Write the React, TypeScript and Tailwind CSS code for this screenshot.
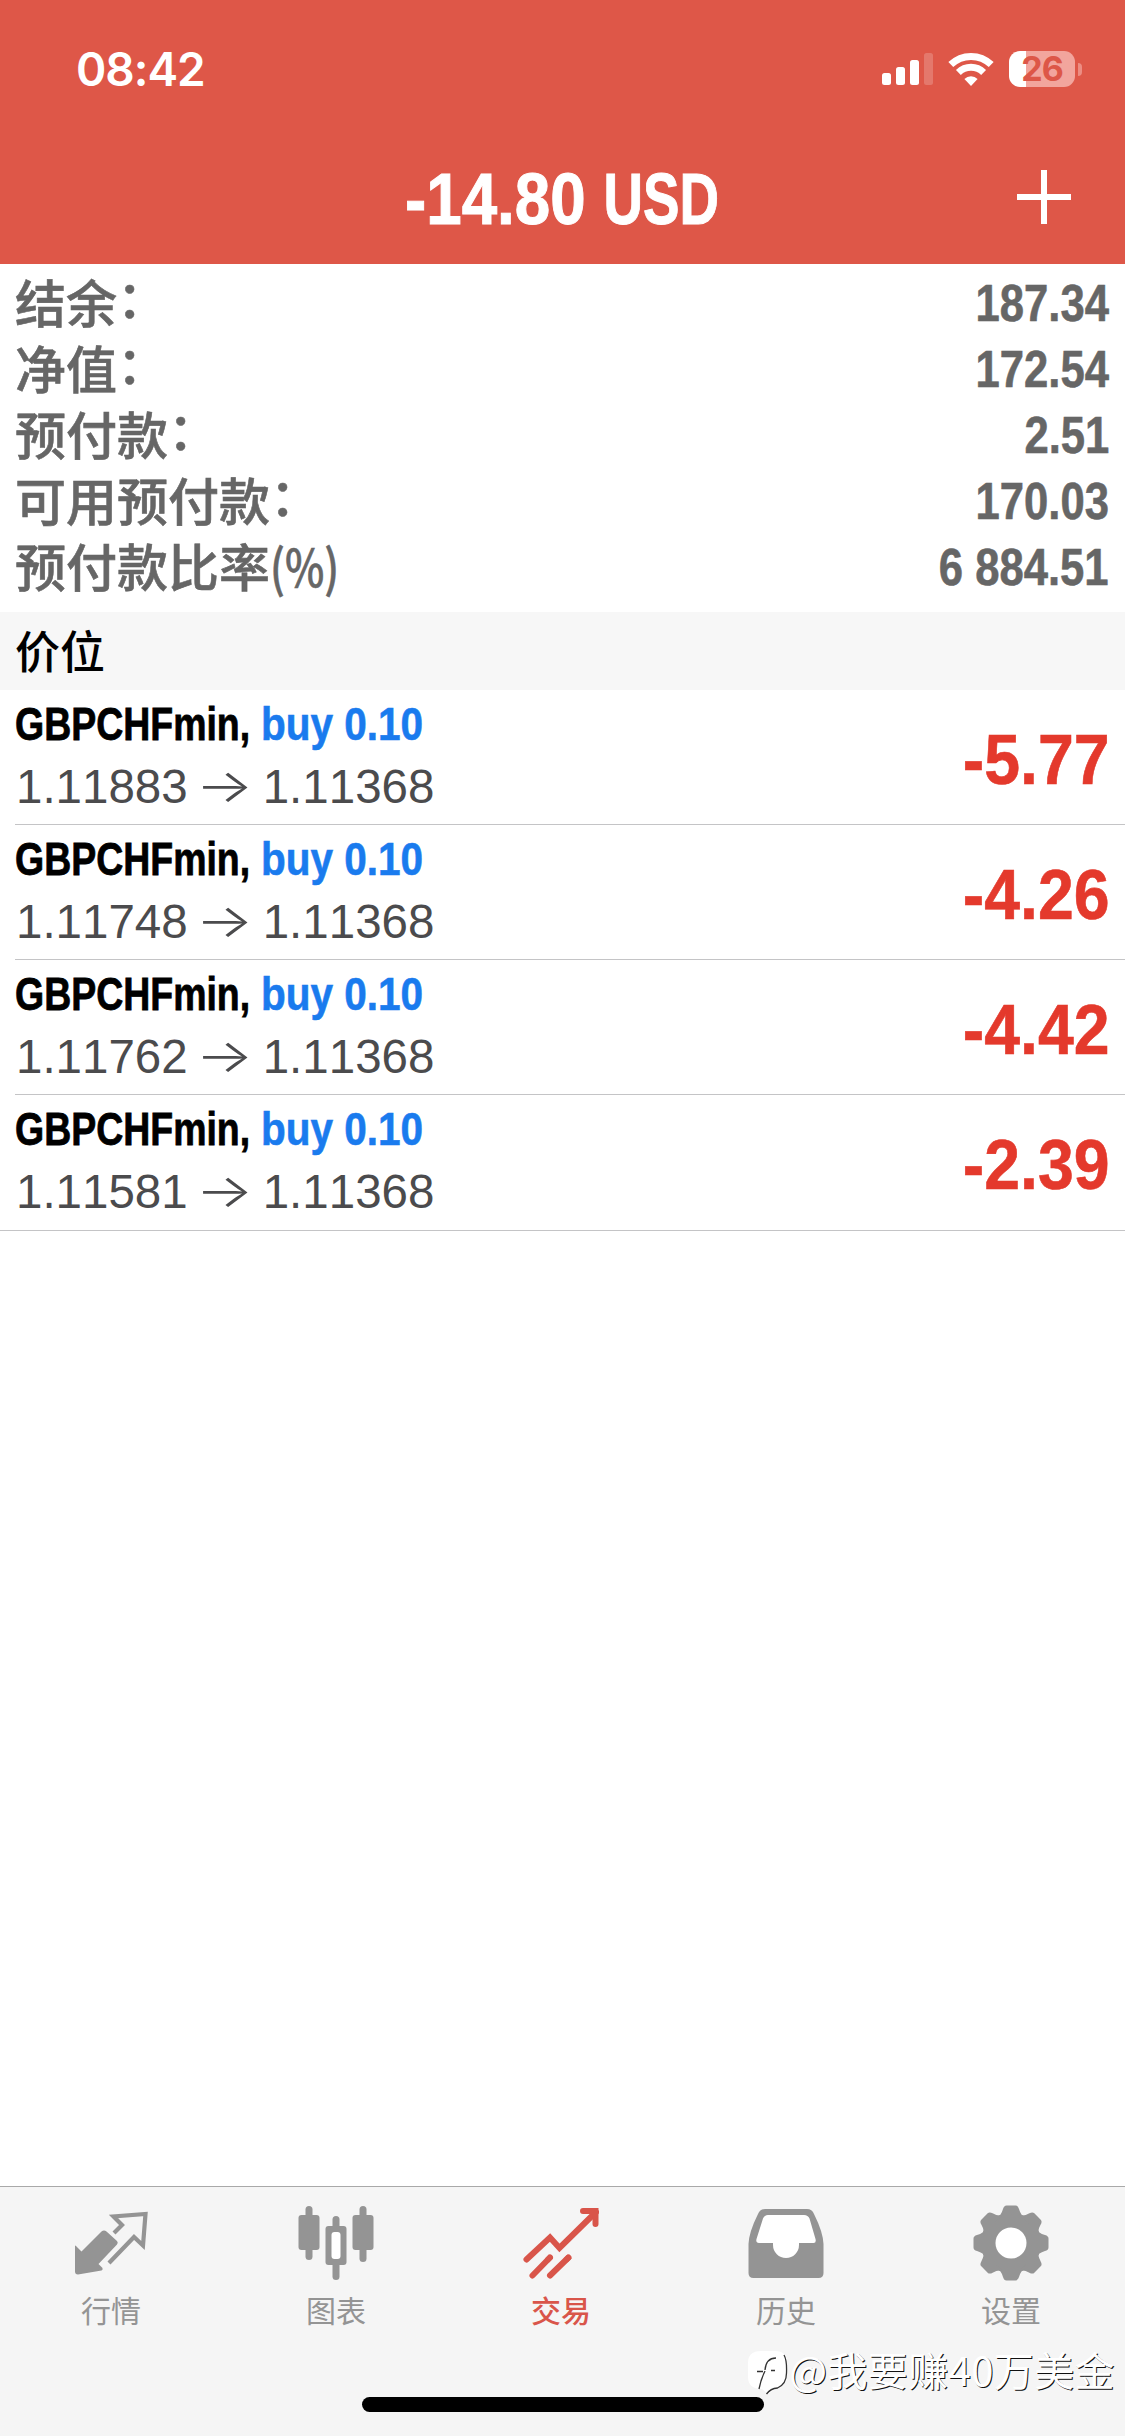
import type { ReactNode } from "react";

const summary = [
  { label: "结余", suffix: "：", value: "187.34" },
  { label: "净值", suffix: "：", value: "172.54" },
  { label: "预付款", suffix: "：", value: "2.51" },
  { label: "可用预付款", suffix: "：", value: "170.03" },
  { label: "预付款比率", suffix: "(%)", value: "6 884.51" },
];

const positions = [
  { symbol: "GBPCHFmin", side: "buy 0.10", open: "1.11883", current: "1.11368", profit: "-5.77" },
  { symbol: "GBPCHFmin", side: "buy 0.10", open: "1.11748", current: "1.11368", profit: "-4.26" },
  { symbol: "GBPCHFmin", side: "buy 0.10", open: "1.11762", current: "1.11368", profit: "-4.42" },
  { symbol: "GBPCHFmin", side: "buy 0.10", open: "1.11581", current: "1.11368", profit: "-2.39" },
];

function StatusBar() {
  return (
    <div className="flex h-[138px] items-center justify-between pr-[43px] pl-[76px]">
      <span className="font-['Inter',sans-serif] text-[46px] leading-none font-semibold tracking-[-1px]">08:42</span>
      <div className="flex items-center">
        <svg width="51" height="34" viewBox="0 0 51 34" fill="currentColor">
          <rect x="0" y="21" width="9" height="12" rx="2.5" />
          <rect x="14" y="15" width="9" height="18" rx="2.5" />
          <rect x="28" y="8" width="9" height="25" rx="2.5" />
          <rect x="42" y="1" width="9" height="32" rx="2.5" opacity="0.2" />
        </svg>
        <svg className="ml-[15px]" width="46" height="34" viewBox="0 0 46 34" fill="none" stroke="currentColor" strokeWidth="7">
          <path d="M2.8 12.6a29 29 0 0 1 40.4 0" />
          <path d="M10.4 20.4a18 18 0 0 1 25.2 0" />
          <path d="M23 34l-6.6-7a9.5 9.5 0 0 1 13.2 0z" fill="currentColor" stroke="none" />
        </svg>
        <div className="ml-[15px] flex h-9 w-[66px] items-center justify-center rounded-[11px] bg-[linear-gradient(90deg,#fff_0_17px,#f2a59d_17px)]">
          <span className="font-['Inter',sans-serif] text-[34px] leading-9 font-bold tracking-[-1px] text-[#dd5748]">26</span>
        </div>
        <div className="ml-[3px] h-[13px] w-1 rounded-r-full bg-[#ec8d83]" />
      </div>
    </div>
  );
}

function Header() {
  return (
    <header className="h-[264px] bg-[#de5748] text-white">
      <StatusBar />
      <div className="grid h-[126px] grid-cols-[1fr_316px_1fr] items-start">
        <span />
        <h1 className="mt-[25px] flex text-[72px] leading-[72px] font-bold [-webkit-text-stroke:1px_white] [font-kerning:none]">
          <span className="w-[200px] shrink-0">
            <span className="inline-block origin-left scale-x-[0.885]">-14.80</span>
          </span>
          <span className="flex w-[115px] justify-end">
            <span className="origin-right scale-x-[0.76]">USD</span>
          </span>
        </h1>
        <button className="mt-[32px] mr-[54px] justify-self-end">
          <svg width="54" height="54" viewBox="0 0 54 54" stroke="currentColor" strokeWidth="6">
            <path d="M27 0v54M0 27h54" />
          </svg>
        </button>
      </div>
    </header>
  );
}

function Summary() {
  return (
    <dl className="h-[348px] pt-1 text-[#666]">
      {summary.map((item) => (
        <div key={item.label} className="flex h-[66px] items-center justify-between pr-4 pl-[15px]">
          <dt className="flex font-['Noto_Sans_CJK_SC',sans-serif] text-[51px] leading-[66px] font-medium [-webkit-text-stroke:0.6px_#666]">
            {item.label}
            {item.suffix === "：" ? (
              <span className="-translate-y-[5px]">{item.suffix}</span>
            ) : (
              <span className="origin-left scale-x-[0.82]">{item.suffix}</span>
            )}
          </dt>
          <dd className="mt-[6px] origin-right scale-x-[0.855] text-[51px] leading-[60px] font-bold [-webkit-text-stroke:0.6px_#666] [font-kerning:none]">
            {item.value}
          </dd>
        </div>
      ))}
    </dl>
  );
}

function PositionRow({ item }: { item: (typeof positions)[number] }) {
  return (
    <li className="group flex h-[135px] pl-[15px] last:h-[136px] last:pl-0">
      <div className="flex flex-1 items-start justify-between border-b border-[#c4c4c6] pr-[15px] group-last:pl-[15px]">
        <div>
          <div className="mt-[6px] flex h-[56px] items-center text-[47px] leading-[56px] font-bold [font-kerning:none]">
            <span className="w-[246px]">
              <span className="inline-block origin-left scale-x-[0.797] text-black [-webkit-text-stroke:0.8px_black]">
                {item.symbol},
              </span>
            </span>
            <span className="inline-block origin-left scale-x-[0.862] text-[#1a7bee] [-webkit-text-stroke:0.6px_#1a7bee]">
              {item.side}
            </span>
          </div>
          <div className="mt-[3px] flex h-[64px] items-center pl-px text-[47.5px] leading-[64px] text-[#4b4b4d] [font-kerning:none]">
            <span>{item.open}</span>
            <span className="flex w-[75px] -translate-x-px -translate-y-[2px] scale-x-[1.32] justify-center font-['Inter',sans-serif] text-[46px] font-light">
              →
            </span>
            <span>{item.current}</span>
          </div>
        </div>
        <span className="mt-[34px] origin-right scale-x-[0.92] text-[70px] leading-[72px] font-bold text-[#e4392c] [-webkit-text-stroke:0.6px_#e4392c] [font-kerning:none]">
          {item.profit}
        </span>
      </div>
    </li>
  );
}

function QuotesIcon() {
  return (
    <svg width="76" height="76" viewBox="0 0 76 76" fill="currentColor">
      <path d="M2 41.500q0-1.500 1-.5l5.500 5.500L28.500 26.500q2.500-2 5 0L44 36q1.500 1.500 0 3.500L25.500 59l4 4q.5 2-1 2.500L5 69.500q-3 0-3-3z" />
      <path d="M41 28l8-8-8.500-8.500L72.500 9 70 40.500l-9-8.500L36 58" fill="none" stroke="currentColor" strokeWidth="4.200" />
    </svg>
  );
}

function ChartIcon() {
  return (
    <svg width="76" height="76" viewBox="0 0 76 76" fill="currentColor">
      <rect x="7.500" y="1" width="7" height="54" rx="3.500" />
      <rect x="0.500" y="10" width="21" height="35" rx="3" />
      <rect x="34.500" y="11" width="7" height="64" rx="3.500" />
      <rect x="27.500" y="21" width="21" height="39" rx="3" />
      <rect x="33.500" y="27" width="9" height="27" rx="3" fill="#fff" />
      <rect x="61.500" y="1" width="7" height="56" rx="3.500" />
      <rect x="54.500" y="10" width="21" height="35" rx="3" />
    </svg>
  );
}

function TradeIcon() {
  return (
    <svg width="76" height="76" viewBox="0 0 76 76" fill="none" stroke="currentColor" strokeWidth="6" strokeLinecap="round">
      <path d="M3.500 54.500L27 32.500l9.500 10.500L73 7" />
      <path d="M60 6h12.500v13" />
      <path d="M9.500 70.500l17.500-18M27 70.500l18.500-18" />
      <path d="M24 55.500l4-4M42.500 55.500l4-4" strokeLinecap="butt" />
    </svg>
  );
}

function HistoryIcon() {
  return (
    <svg width="76" height="76" viewBox="0 0 76 76" fill="currentColor">
      <path d="M17 4h42q5 0 7 5 9 18 9.500 30v29q0 5-5 5h-65q-5 0-5-5V39Q1 27 10 9q2-5 7-5z" />
      <path d="M20 10h36q4 0 5.500 3.500L67.500 34q1 4-2 4H51v2a13 13 0 0 1-26 0v-2H11q-3.500 0-2.500-4L15 13.500Q16.500 10 20 10z" fill="#fff" />
    </svg>
  );
}

function SettingsIcon() {
  return (
    <svg width="76" height="76" viewBox="0 0 76 76" fill="currentColor">
      <circle cx="38" cy="38" r="30" />
      {[0, 45, 90, 135, 180, 225, 270, 315].map((angle) => (
        <path key={angle} d="M24 12q4-1 6-8 1-3.500 3.500-3.500h9q2.500 0 3.500 3.500 2 7 6 8z" transform={`rotate(${angle} 38 38)`} />
      ))}
      <circle cx="38" cy="38" r="15.500" fill="#fff" />
    </svg>
  );
}

const tabs: { label: string; icon: ReactNode; active?: boolean }[] = [
  { label: "行情", icon: <QuotesIcon /> },
  { label: "图表", icon: <ChartIcon /> },
  { label: "交易", icon: <TradeIcon />, active: true },
  { label: "历史", icon: <HistoryIcon /> },
  { label: "设置", icon: <SettingsIcon /> },
];

function TabBar() {
  return (
    <nav className="grid h-[250px] grid-cols-5 border-t border-[#a9a9a9] bg-[#f5f5f5] pt-[18px]">
      {tabs.map((tab) => (
        <div
          key={tab.label}
          className={
            tab.active
              ? "flex flex-col items-center pr-[3px] font-medium text-[#d9554a]"
              : "flex flex-col items-center pr-[3px] text-[#949494]"
          }
        >
          {tab.icon}
          <span className="mt-[8px] font-['Noto_Sans_CJK_SC',sans-serif] text-[30px] leading-10">{tab.label}</span>
        </div>
      ))}
    </nav>
  );
}

function Watermark() {
  return (
    <div className="absolute right-[10px] bottom-[39px] flex items-start text-white">
      <svg className="mt-[3px] mr-[-3px]" width="44" height="46" viewBox="0 0 44 46" fill="none">
        <path d="M13 0h14q12 0 12 12v13q0 10-10 12l-9 6-6-5q-14 0-14-12V12Q0 0 13 0z" fill="#fff" />
        <path
          d="M36 4q3 5 2.500 18 0 11-9 15-7 .5-11 6M28 7q-10 0-11 12M9 20.500h6M23 19.500h4M17 20q-4 8-6 18"
          stroke="#333"
          strokeWidth="1.300"
        />
      </svg>
      <span className="font-['Noto_Sans_CJK_SC',sans-serif] text-[40px] leading-[42px] tracking-[0.4px] [text-shadow:1px_1px_0.5px_#111]">
        @我要赚40万美金
      </span>
    </div>
  );
}

export default function App() {
  return (
    <div className="relative flex h-[2436px] w-[1125px] flex-col bg-white font-['Liberation_Sans',sans-serif]">
      <Header />
      <Summary />
      <h2 className="h-[78px] bg-[#f7f7f7] pl-[15px] font-['Noto_Sans_CJK_SC',sans-serif] text-[45px] leading-[76px] font-medium text-black">
        价位
      </h2>
      <ul className="flex-1">
        {positions.map((item) => (
          <PositionRow key={item.open} item={item} />
        ))}
      </ul>
      <TabBar />
      <div className="absolute bottom-6 left-[362px] h-[15px] w-[402px] rounded-full bg-black" />
      <Watermark />
    </div>
  );
}
